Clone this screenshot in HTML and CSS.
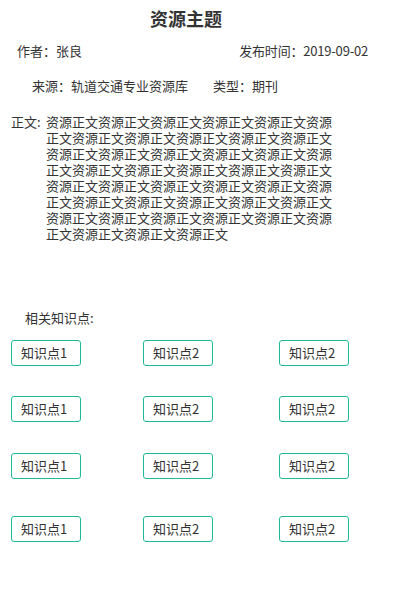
FILE: index.html
```html
<!DOCTYPE html>
<html lang="zh">
<head>
<meta charset="utf-8">
<title>资源主题</title>
<link rel="stylesheet" href="styles.css">
</head>
<body>
<div class="page">
  <h1 class="title">资源主题</h1>
  <div class="meta meta-top">
    <span>作者：张良</span>
    <span class="date">发布时间：2019-09-02</span>
  </div>
  <div class="meta meta-src">
    <span class="src">来源：轨道交通专业资源库</span>
    <span>类型：期刊</span>
  </div>
  <div class="content">
    <span class="label">正文:</span>
    <p class="body">资源正文资源正文资源正文资源正文资源正文资源正文资源正文资源正文资源正文资源正文资源正文资源正文资源正文资源正文资源正文资源正文资源正文资源正文资源正文资源正文资源正文资源正文资源正文资源正文资源正文资源正文资源正文资源正文资源正文资源正文资源正文资源正文资源正文资源正文资源正文资源正文资源正文资源正文资源正文资源正文资源正文资源正文</p>
  </div>
  <div class="related">相关知识点:</div>
  <div class="tags r1">
    <span class="tag">知识点1</span><span class="tag">知识点2</span><span class="tag">知识点2</span>
  </div>
  <div class="tags r2">
    <span class="tag">知识点1</span><span class="tag">知识点2</span><span class="tag">知识点2</span>
  </div>
  <div class="tags r3">
    <span class="tag">知识点1</span><span class="tag">知识点2</span><span class="tag">知识点2</span>
  </div>
  <div class="tags r4">
    <span class="tag">知识点1</span><span class="tag">知识点2</span><span class="tag">知识点2</span>
  </div>
</div>
</body>
</html>
```
FILE: styles.css
```css
html, body {
  margin: 0;
  padding: 0;
  background: #fff;
}
body {
  font-family: "Noto Sans CJK SC", "Noto Sans", sans-serif;
  color: #333;
  font-size: 13px;
}
.page {
  width: 404px;
}
.title {
  width: 372px;
  margin: 8px 0 0 0;
  text-align: center;
  font-size: 18px;
  line-height: 20px;
  font-weight: bold;
  color: #333;
}
.meta {
  display: flex;
  line-height: 16px;
}
.meta-top {
  margin-top: 15px;
  padding: 0 36px 0 17px;
  justify-content: space-between;
}
.date {
  letter-spacing: -0.2px;
}
.meta-src {
  margin-top: 19px;
  padding-left: 32px;
}
.src {
  width: 181px;
}
.content {
  display: flex;
  margin-top: 20px;
  padding-left: 11px;
  line-height: 16px;
}
.label {
  width: 35px;
  flex: none;
}
.body {
  margin: 0;
  width: 290px;
  word-break: break-all;
}
.related {
  margin-top: 68px;
  padding-left: 25px;
  line-height: 16px;
}
.tags {
  display: grid;
  grid-template-columns: 132px 136px 70px;
  padding-left: 11px;
}
.r1 { margin-top: 14px; }
.r2 { margin-top: 30px; }
.r3 { margin-top: 31px; }
.r4 { margin-top: 37px; }
.tag {
  box-sizing: border-box;
  width: 70px;
  height: 26px;
  border: 1px solid #1fbb98;
  border-radius: 3px;
  padding-left: 9px;
  line-height: 24px;
  font-size: 13px;
  color: #333;
}
```
